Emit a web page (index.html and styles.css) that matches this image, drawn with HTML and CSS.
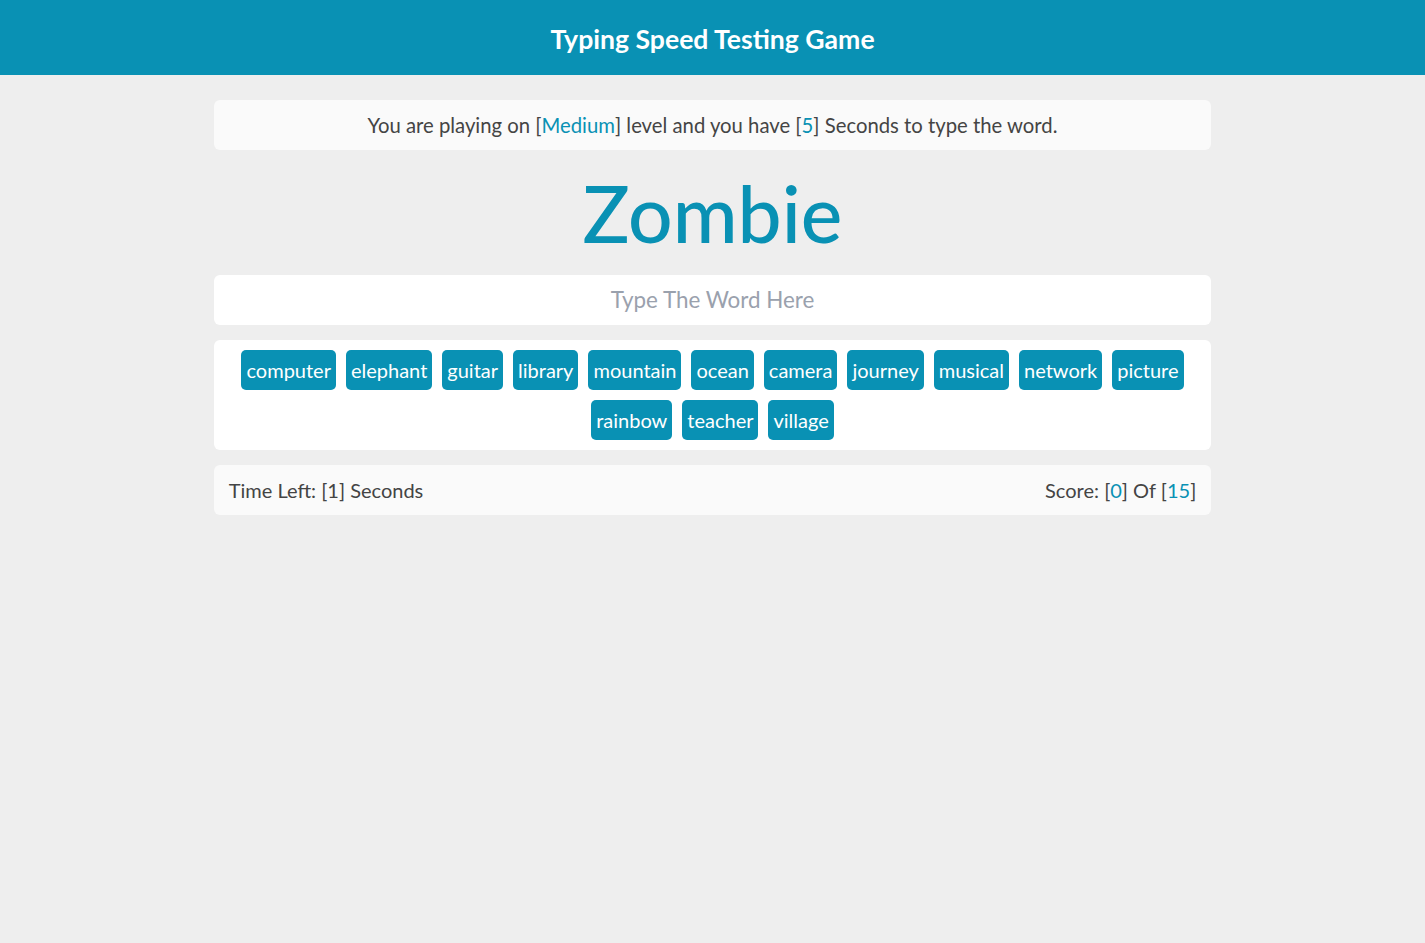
FILE: index.html
```html
<!DOCTYPE html>
<html lang="en">
<head>
<meta charset="utf-8">
<title>Typing Speed Testing Game</title>
<link rel="stylesheet" href="styles.css">
</head>
<body>
<header class="top">Typing Speed Testing Game</header>
<main class="game">
  <div class="message">You are playing on [<span class="hl">Medium</span>] level and you have [<span class="hl">5</span>] Seconds to type the word.</div>
  <div class="the-word">Zombie</div>
  <input class="input" type="text" placeholder="Type The Word Here">
  <div class="upcoming">
    <span class="tag">computer</span><span class="tag">elephant</span><span class="tag">guitar</span><span class="tag">library</span><span class="tag">mountain</span><span class="tag">ocean</span><span class="tag">camera</span><span class="tag">journey</span><span class="tag">musical</span><span class="tag">network</span><span class="tag">picture</span><span class="tag">rainbow</span><span class="tag">teacher</span><span class="tag">village</span>
  </div>
  <div class="control">
    <div class="time">Time Left: [1] Seconds</div>
    <div class="score">Score: [<span class="hl">0</span>] Of [<span class="hl">15</span>]</div>
  </div>
</main>
</body>
</html>
```
FILE: styles.css
```css
* { box-sizing: border-box; }
body {
  margin: 0;
  background: #eeeeee;
  font-family: "Lato", "Open Sans", sans-serif;
  color: #444;
}
.top {
  height: 75px;
  background: #0991b4;
  color: #fff;
  font-weight: bold;
  font-size: 26.6px;
  display: flex;
  align-items: center;
  justify-content: center;
  padding-top: 3px;
}
.game {
  width: 70%;
  margin: 25px auto 0;
  display: flex;
  flex-direction: column;
}
.message {
  height: 50px;
  background: #fafafa;
  border-radius: 6px;
  display: flex;
  align-items: center;
  justify-content: center;
  font-size: 20.3px;
}
.hl { color: #0991b4; }
.the-word {
  height: 125px;
  display: flex;
  align-items: center;
  justify-content: center;
  font-size: 78.5px;
  font-weight: 500;
  color: #0991b4;
}
.input {
  height: 50px;
  border: none;
  border-radius: 6px;
  background: #fff;
  text-align: center;
  font-family: inherit;
  font-size: 22.4px;
  outline: none;
  padding-bottom: 2px;
}
.input::placeholder { color: #9aa1ad; }
.upcoming {
  margin-top: 15px;
  background: #fff;
  border-radius: 6px;
  padding: 10px;
  display: flex;
  flex-wrap: wrap;
  justify-content: center;
  gap: 10px;
}
.tag {
  height: 40px;
  background: #0991b4;
  color: #fff;
  border-radius: 5px;
  padding: 0 5px;
  font-size: 20px;
  display: flex;
  align-items: center;
}
.control {
  margin-top: 15px;
  height: 50px;
  background: #fafafa;
  border-radius: 6px;
  padding: 0 15px;
  display: flex;
  align-items: center;
  justify-content: space-between;
  font-size: 20px;
}
```
